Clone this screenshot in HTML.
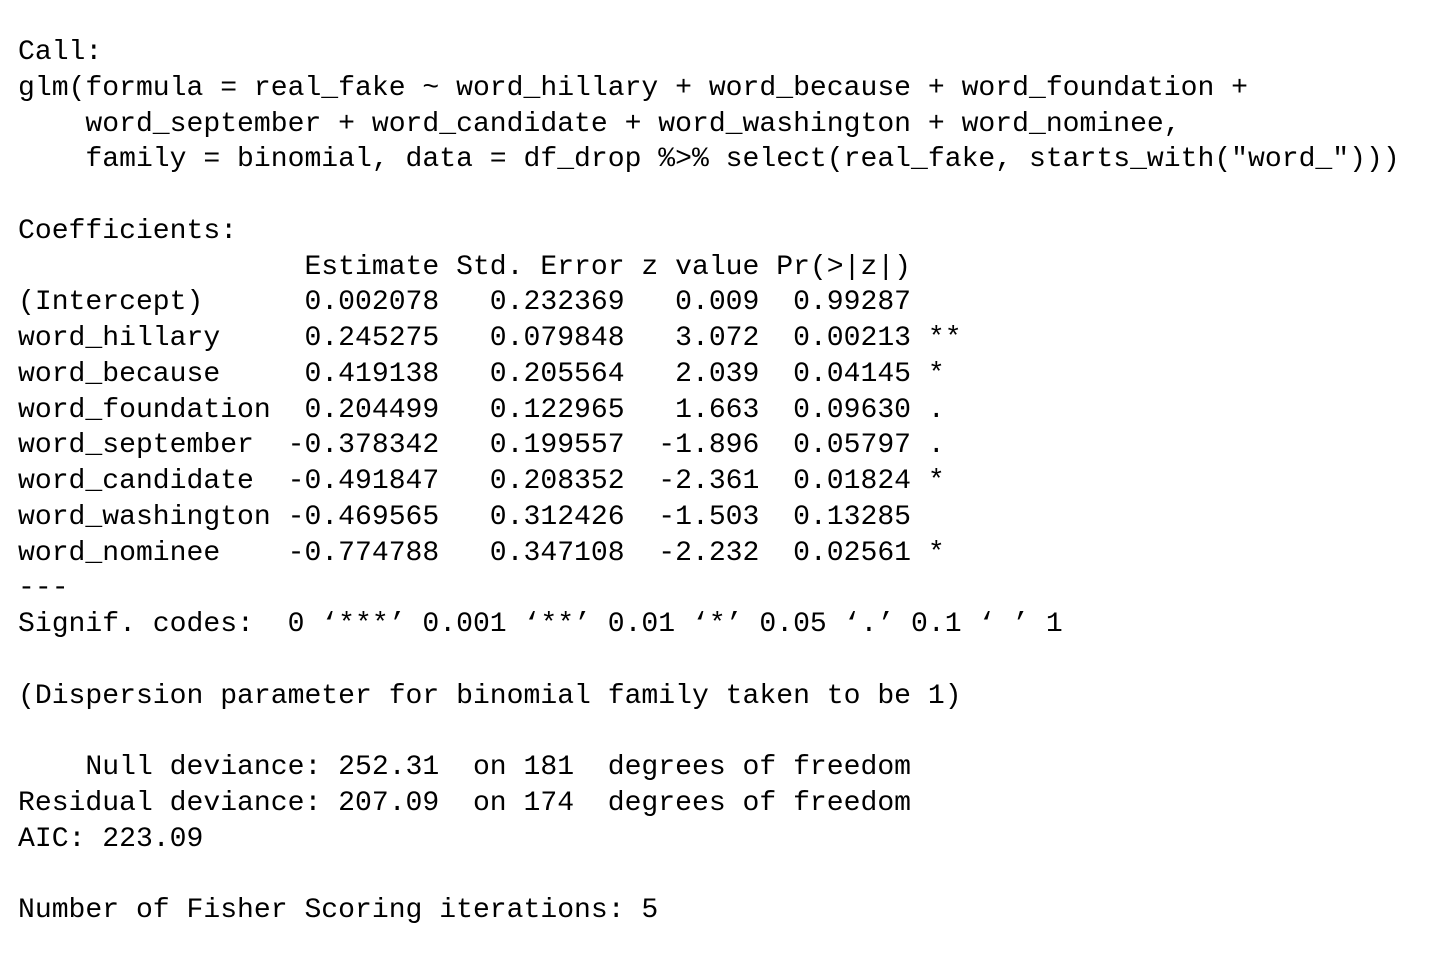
<!DOCTYPE html>
<html><head><meta charset="utf-8"><style>
html,body{margin:0;padding:0;background:#fff;width:1446px;height:956px;overflow:hidden}
pre{margin:0;position:absolute;left:18px;top:35px;font-family:"Liberation Mono","DejaVu Sans Mono",monospace;font-size:28.08px;line-height:35.75px;color:#000;white-space:pre}
</style></head><body><pre>Call:
glm(formula = real_fake ~ word_hillary + word_because + word_foundation + 
    word_september + word_candidate + word_washington + word_nominee, 
    family = binomial, data = df_drop %&gt;% select(real_fake, starts_with("word_")))

Coefficients:
                 Estimate Std. Error z value Pr(&gt;|z|)   
(Intercept)      0.002078   0.232369   0.009  0.99287   
word_hillary     0.245275   0.079848   3.072  0.00213 **
word_because     0.419138   0.205564   2.039  0.04145 * 
word_foundation  0.204499   0.122965   1.663  0.09630 . 
word_september  -0.378342   0.199557  -1.896  0.05797 . 
word_candidate  -0.491847   0.208352  -2.361  0.01824 * 
word_washington -0.469565   0.312426  -1.503  0.13285   
word_nominee    -0.774788   0.347108  -2.232  0.02561 * 
---
Signif. codes:  0 ‘***’ 0.001 ‘**’ 0.01 ‘*’ 0.05 ‘.’ 0.1 ‘ ’ 1

(Dispersion parameter for binomial family taken to be 1)

    Null deviance: 252.31  on 181  degrees of freedom
Residual deviance: 207.09  on 174  degrees of freedom
AIC: 223.09

Number of Fisher Scoring iterations: 5</pre></body></html>
